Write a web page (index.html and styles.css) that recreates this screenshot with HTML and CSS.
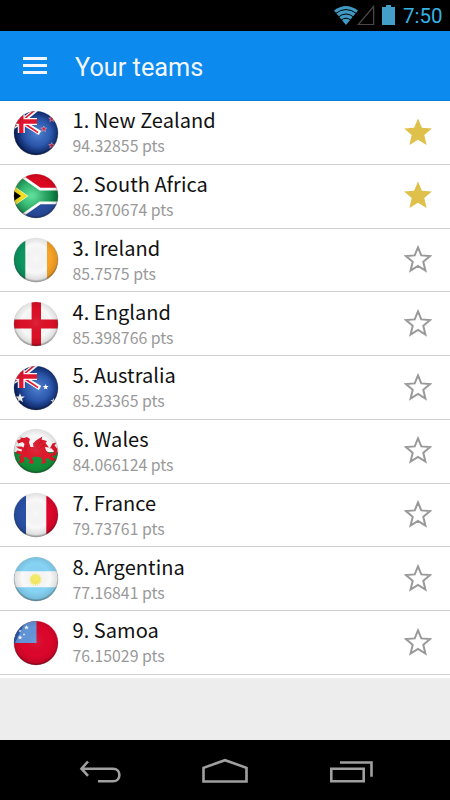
FILE: index.html
```html
<!DOCTYPE html>
<html lang="en">
<head>
<meta charset="utf-8">
<title>Your teams</title>
<link rel="stylesheet" href="styles.css">
</head>
<body>
<svg class="defs" aria-hidden="true">
  <defs>
    <clipPath id="disc"><circle cx="23" cy="23" r="22"/></clipPath>
    <radialGradient id="shade" cx=".5" cy=".47" r=".53">
      <stop offset="0" stop-color="#fff" stop-opacity=".08"/>
      <stop offset=".6" stop-color="#000" stop-opacity="0"/>
      <stop offset=".88" stop-color="#000" stop-opacity=".1"/>
      <stop offset="1" stop-color="#000" stop-opacity=".48"/>
    </radialGradient>
    <radialGradient id="blue" cx=".55" cy=".5" r=".5">
      <stop offset="0" stop-color="#4a7dd2"/>
      <stop offset=".55" stop-color="#2c59ad"/>
      <stop offset="1" stop-color="#0c2468"/>
    </radialGradient>
    <radialGradient id="green" gradientUnits="userSpaceOnUse" cx="18" cy="23" r="25">
      <stop offset="0" stop-color="#5ce69b"/>
      <stop offset="1" stop-color="#087c3d"/>
    </radialGradient>
    <path id="star5" d="M0-3 .8-1 3-.9 1.2.5 1.9 2.6 0 1.4-1.9 2.6-1.2.5-3-.9-.8-1z"/>
    <g id="jack">
      <path d="M8.300 11.500 27 23M24-1 8.300 11.500M8.300 11.500-4 20M8.300 11.500-6 2" stroke="#fff" stroke-width="4.600"/>
      <path d="M8.300 11.500 25 22.500M22.500-.5 8.300 11.500M8.300 11.500-4 20M8.300 11.500-6 2" stroke="#e3142e" stroke-width="1.500"/>
      <path d="M8.300 0V23M0 11.500H24" stroke="#fff" stroke-width="7"/>
      <path d="M8.300 0V23M0 11.500H24" stroke="#e3142e" stroke-width="4.300"/>
    </g>
    <g id="gloss"><circle cx="23" cy="23" r="22.300" fill="url(#shade)"/></g>
    <path id="star" d="M14 .4 17.900 9.700 27.900 10.500 20.300 17.100 22.600 27 14 21.700 5.400 27 7.700 17.100.1 10.500 10.100 9.700z"/>
    <path id="star-line" d="M14 2.400 17.300 10.400 26 11.100 19.300 16.800 21.400 25.500 14 20.900 6.600 25.500 8.700 16.800 2 11.100 10.700 10.400z" fill="none" stroke="#999" stroke-width="2"/>
  </defs>
</svg>
<div class="status">
  <svg class="wifi" viewBox="0 0 26 20" width="26" height="20"><path d="M1 5.500Q13-3.500 25 5.500L13 20z" fill="#4099c2"/><path d="M2.500 8.500Q13 .5 23.500 8.500M5.300 12Q13 6 20.700 12M8 15.200Q13 11.200 18 15.200" fill="none" stroke="#000" stroke-width="1"/></svg>
  <svg class="signal" viewBox="0 0 18 20" width="18" height="20"><path d="M16.600 1.500V19.600H1.200z" fill="none" stroke="#484848" stroke-width="1.300"/></svg>
  <svg class="battery" viewBox="0 0 13 20" width="13" height="20"><path d="M0 2H4V0H9V2H13V20H0z" fill="#439fc8"/></svg>
  <span class="clock">7:50</span>
</div>
<header class="bar">
  <div class="menu"><i></i><i></i><i></i></div>
  <h1>Your teams</h1>
</header>
<main class="list">
  <div class="team">
    <svg class="flag" viewBox="0 0 46 46"><g clip-path="url(#disc)"><path d="M0 0H46V46H0z" fill="url(#blue)"/><use href="#jack"/><g fill="#d51e42" stroke="#e9aebf" stroke-width=".6"><use href="#star5" x="30.700" y="19"/><use href="#star5" x="38.700" y="9"/><use href="#star5" x="38.700" y="35.500"/></g></g><use href="#gloss"/></svg>
    <div class="text"><div class="name">1. New Zealand</div><div class="pts">94.32855 pts</div></div>
    <svg class="fav on" viewBox="0 0 28 28"><use href="#star"/></svg>
  </div>
  <div class="team">
    <svg class="flag" viewBox="0 0 46 46"><g clip-path="url(#disc)"><path d="M0 0H46V23H0z" fill="#dc0820"/><path d="M0 23H46V46H0z" fill="#294e9f"/><path d="M-3 3.400 25 23H46M-3 42.600 25 23" fill="none" stroke="#fff" stroke-width="16.500"/><path d="M-3 3.400 25 23H46M-3 42.600 25 23" fill="none" stroke="url(#green)" stroke-width="11"/><path d="M0 12.800 14.500 23 0 33.200z" fill="#f5df20"/><path d="M0 17.500 8 23 0 28.500z" fill="#000"/></g><use href="#gloss"/></svg>
    <div class="text"><div class="name">2. South Africa</div><div class="pts">86.370674 pts</div></div>
    <svg class="fav on" viewBox="0 0 28 28"><use href="#star"/></svg>
  </div>
  <div class="team">
    <svg class="flag" viewBox="0 0 46 46"><g clip-path="url(#disc)"><path d="M0 0H46V46H0z" fill="#f8f8f8"/><path d="M0 0H12.300V46H0z" fill="#0c9660"/><path d="M34 0H46V46H34z" fill="#f9a428"/></g><use href="#gloss"/></svg>
    <div class="text"><div class="name">3. Ireland</div><div class="pts">85.7575 pts</div></div>
    <svg class="fav" viewBox="0 0 28 28"><use href="#star-line"/></svg>
  </div>
  <div class="team">
    <svg class="flag" viewBox="0 0 46 46"><g clip-path="url(#disc)"><path d="M0 0H46V46H0z" fill="#f8f8f8"/><path d="M18.600 0H28V18.500H46V27.500H28V46H18.600V27.500H0V18.500H18.600z" fill="#dc1027"/></g><use href="#gloss"/></svg>
    <div class="text"><div class="name">4. England</div><div class="pts">85.398766 pts</div></div>
    <svg class="fav" viewBox="0 0 28 28"><use href="#star-line"/></svg>
  </div>
  <div class="team">
    <svg class="flag" viewBox="0 0 46 46"><g clip-path="url(#disc)"><path d="M0 0H46V46H0z" fill="url(#blue)"/><use href="#jack"/><g fill="#fff"><use href="#star5" x="32.700" y="22"/><use href="#star5" transform="translate(7 33) scale(1.600)"/><use href="#star5" x="40.500" y="36"/></g></g><use href="#gloss"/></svg>
    <div class="text"><div class="name">5. Australia</div><div class="pts">85.23365 pts</div></div>
    <svg class="fav" viewBox="0 0 28 28"><use href="#star-line"/></svg>
  </div>
  <div class="team">
    <svg class="flag" viewBox="0 0 46 46"><g clip-path="url(#disc)"><path d="M0 0H46V24H0z" fill="#f8f8f8"/><path d="M0 24H46V46H0z" fill="#13943a"/><path d="M4 12.500 8 11 7 9.500 11 10 14 9 17 11 16 14.500 17.500 19 20.500 19 20 15.500 23 12.500 29.500 8.500 28.500 11.500 34 13 32.500 15 36 19.500 32 19 33 22.500 36 25 39.500 25.500 41 23 38 20 36.500 21 39.500 15.500 43.500 14.500 41.500 17.500 44.500 21 44 26 41 28 38.500 28.500 42 30.500 43 33 38 32.500 35 30 32.500 31 33 35 28 36 29.500 33 28 29.500 22 28.500 18.500 30 20.500 33 20 36 15.500 35 17 32.500 14 29.500 10.500 29 11.500 32 9.500 35 5.500 34.500 7.500 32 6 29 8.500 26.500 5 26 2.500 24.500 4.500 22.500 8.500 23.500 9 21.500 5.500 20.500 3 18.500 8.500 18.500 10.500 19.500 11.500 16 9.500 14 5 15.500z" fill="#df182b"/><path d="M22.500 21.500 28.500 12.500M24.500 22 31.500 16.500M12 22.500 14 18" stroke="#a8102a" stroke-width=".6"/></g><use href="#gloss"/></svg>
    <div class="text"><div class="name">6. Wales</div><div class="pts">84.066124 pts</div></div>
    <svg class="fav" viewBox="0 0 28 28"><use href="#star-line"/></svg>
  </div>
  <div class="team">
    <svg class="flag" viewBox="0 0 46 46"><g clip-path="url(#disc)"><path d="M0 0H46V46H0z" fill="#f8f8f8"/><path d="M0 0H13V46H0z" fill="#2951a6"/><path d="M33.300 0H46V46H33.300z" fill="#df062b"/></g><use href="#gloss"/></svg>
    <div class="text"><div class="name">7. France</div><div class="pts">79.73761 pts</div></div>
    <svg class="fav" viewBox="0 0 28 28"><use href="#star-line"/></svg>
  </div>
  <div class="team">
    <svg class="flag" viewBox="0 0 46 46"><g clip-path="url(#disc)"><path d="M0 0H46V46H0z" fill="#86d3f5"/><path d="M0 15.300H46V31.300H0z" fill="#f9f9f9"/><circle cx="22.500" cy="23.500" r="5" fill="#f5e960"/><circle cx="22.500" cy="23.500" r="5.600" fill="none" stroke="#f5e960" stroke-width="1.200" stroke-dasharray="1 1"/></g><use href="#gloss"/></svg>
    <div class="text"><div class="name">8. Argentina</div><div class="pts">77.16841 pts</div></div>
    <svg class="fav" viewBox="0 0 28 28"><use href="#star-line"/></svg>
  </div>
  <div class="team">
    <svg class="flag" viewBox="0 0 46 46"><g clip-path="url(#disc)"><path d="M0 0H46V46H0z" fill="#dc062b"/><path d="M0 0H23.500V23H0z" fill="#6295d8"/><path d="M0 0H13L2 23H0z" fill="#2b5db0"/><g fill="#fff"><use href="#star5" transform="translate(13.500 7.500) scale(.8)"/><use href="#star5" transform="translate(7 17.500) scale(.8)"/><use href="#star5" transform="translate(11 14.500) scale(.4)"/><use href="#star5" transform="translate(7 11) scale(.5)"/></g></g><use href="#gloss"/></svg>
    <div class="text"><div class="name">9. Samoa</div><div class="pts">76.15029 pts</div></div>
    <svg class="fav" viewBox="0 0 28 28"><use href="#star-line"/></svg>
  </div>
</main>
<nav class="nav">
  <svg viewBox="0 0 340 60" width="340" height="60" fill="none" stroke="#a0a0a0" stroke-width="2.600">
    <path d="M28 21.500 21.500 28.700 28 35.900M21.500 28.700H53C61.500 28.700 61.500 41.300 53 41.300H38"/>
    <path d="M83.500 41.500V27.800L105 20.200 126.500 27.800V41.500z" transform="translate(60)"/>
    <path d="M271.300 28.700H303.700V41.300H271.300zM280 22.500H311.500V36.800"/>
  </svg>
</nav>
</body>
</html>
```
FILE: styles.css
```css
* { box-sizing: border-box; }
body {
  margin: 0;
  width: 450px;
  height: 800px;
  overflow: hidden;
  display: flex;
  flex-direction: column;
  background: #ededed;
}
.defs { position: absolute; width: 0; height: 0; }
.status {
  height: 31px;
  background: #000;
  display: flex;
  align-items: flex-start;
  justify-content: flex-end;
  padding: 5px 7px 0 0;
}
.signal { margin-left: -2px; }
.battery { margin: 0 8px 0 7px; }
.clock {
  width: 40px;
  font: 20.5px/23px Roboto, sans-serif;
  color: #35b3e3;
  white-space: nowrap;
}
.bar {
  height: 70px;
  background: #0c8aee;
  display: flex;
  align-items: center;
  padding-left: 23px;
  border-bottom: 1px solid #087edf;
}
.menu { width: 24px; display: grid; gap: 4px; }
.menu i { height: 3px; background: #f3f6ff; }
.bar h1 {
  margin: 4px 0 0 28px;
  font: 400 25.3px/30px Roboto, sans-serif;
  color: #f3f6ff;
}
.list {
  background: #fff;
  height: 577px;
}
.team {
  height: 63.75px;
  display: flex;
  align-items: center;
  padding: 0 18px 0 13.2px;
  border-bottom: 1.4px solid #d0d0d0;
}
.flag { width: 46px; height: 46px; flex: none; margin-top: 0.5px; }
.text {
  flex: 1;
  padding: 1.8px 0 0 13.3px;
  font-family: "Noto Sans CJK SC", sans-serif;
  white-space: nowrap;
}
.name { font-size: 20px; line-height: 25px; color: #111; letter-spacing: 0.06px; }
.pts { font-size: 15.85px; line-height: 27px; color: #999; }
.fav { width: 28px; height: 28px; fill: #999; margin-bottom: 1.6px; }
.fav.on { fill: #dec04b; }
.nav {
  margin-top: auto;
  height: 60px;
  background: #000;
  display: flex;
  padding-left: 60px;
}
```
